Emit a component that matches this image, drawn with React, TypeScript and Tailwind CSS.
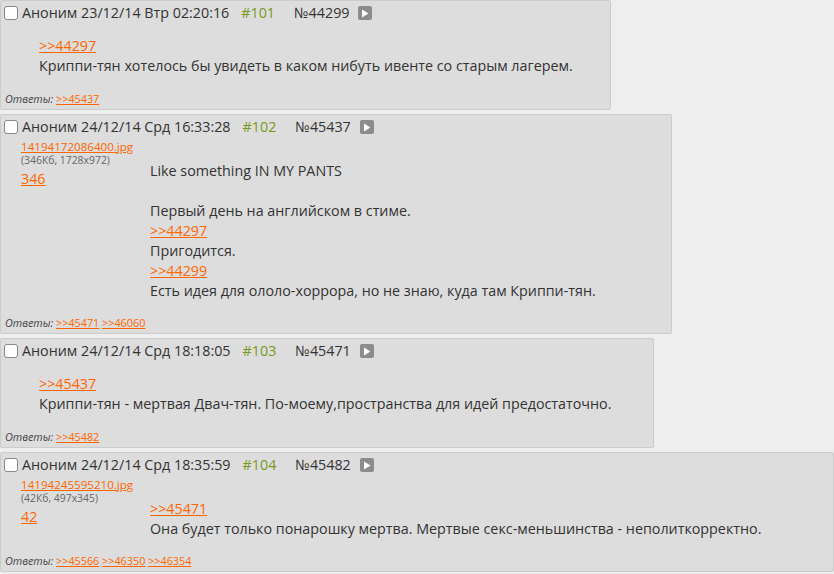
type Line = { kind: "link" | "text" | "blank"; value: string }

type Post = {
  num: number
  date: string
  id: string
  width: string
  file?: { name: string; info: string; alt: string }
  body: Line[]
  answers: string[]
}

const posts: Post[] = [
  {
    num: 101,
    date: "23/12/14 Втр 02:20:16",
    id: "44299",
    width: "w-[611px]",
    body: [
      { kind: "link", value: ">>44297" },
      { kind: "text", value: "Криппи-тян хотелось бы увидеть в каком нибуть ивенте со старым лагерем." },
    ],
    answers: [">>45437"],
  },
  {
    num: 102,
    date: "24/12/14 Срд 16:33:28",
    id: "45437",
    width: "w-[672px]",
    file: { name: "14194172086400.jpg", info: "(346Кб, 1728x972)", alt: "346" },
    body: [
      { kind: "text", value: "Like something IN MY PANTS" },
      { kind: "blank", value: "" },
      { kind: "text", value: "Первый день на английском в стиме." },
      { kind: "link", value: ">>44297" },
      { kind: "text", value: "Пригодится." },
      { kind: "link", value: ">>44299" },
      { kind: "text", value: "Есть идея для ололо-хоррора, но не знаю, куда там Криппи-тян." },
    ],
    answers: [">>45471", ">>46060"],
  },
  {
    num: 103,
    date: "24/12/14 Срд 18:18:05",
    id: "45471",
    width: "w-[654px]",
    body: [
      { kind: "link", value: ">>45437" },
      { kind: "text", value: "Криппи-тян - мертвая Двач-тян. По-моему,пространства для идей предостаточно." },
    ],
    answers: [">>45482"],
  },
  {
    num: 104,
    date: "24/12/14 Срд 18:35:59",
    id: "45482",
    width: "w-full",
    file: { name: "14194245595210.jpg", info: "(42Кб, 497x345)", alt: "42" },
    body: [
      { kind: "link", value: ">>45471" },
      { kind: "text", value: "Она будет только понарошку мертва. Мертвые секс-меньшинства - неполиткорректно." },
    ],
    answers: [">>45566", ">>46350", ">>46354"],
  },
]

function PlayButton() {
  return (
    <span className="ml-[9px] flex h-[14px] w-[14px] items-center justify-center rounded-[2px] bg-[#8c8c8c]">
      <svg width="8" height="9" viewBox="0 0 8 9">
        <path d="M1 0.5 L7.5 4.5 L1 8.5 Z" fill="#fff" />
      </svg>
    </span>
  )
}

function Body({ lines }: { lines: Line[] }) {
  return (
    <div className="whitespace-nowrap text-[14.3px] leading-[20px] text-[#333]">
      {lines.map((l, i) =>
        l.kind === "link" ? (
          <div key={i}>
            <a className="text-[#ff6600] underline">{l.value}</a>
          </div>
        ) : l.kind === "blank" ? (
          <div key={i} className="h-[20px]" />
        ) : (
          <div key={i}>{l.value}</div>
        ),
      )}
    </div>
  )
}

function PostCard({ post }: { post: Post }) {
  return (
    <div className={`${post.width} rounded-[2px] border border-[#cccccc] bg-[#dddddd]`}>
      <div className="flex items-center pt-[2px] pl-[3px] text-[14.3px] leading-[20px] text-[#333]">
        <span className="h-[14px] w-[14px] rounded-[3px] border border-[#888] bg-white" />
        <span className="ml-[4px]">Аноним {post.date}</span>
        <span className="ml-[12px] text-[#789922]">#{post.num}</span>
        <span className="ml-[19px]">№{post.id}</span>
        <PlayButton />
      </div>

      {post.file ? (
        <div className="mt-[3px] flex">
          <div className="ml-[20px] w-[129px] shrink-0">
            <a className="block text-[11.6px] leading-[14px] text-[#ff6600] underline">{post.file.name}</a>
            <div className="text-[10.4px] leading-[12px] text-[#666]">{post.file.info}</div>
            <a className="mt-[3px] block text-[14.3px] leading-[20px] text-[#ff6600] underline">{post.file.alt}</a>
          </div>
          <div className="mt-[21px]">
            <Body lines={post.body} />
          </div>
        </div>
      ) : (
        <div className="mt-[13px] pl-[38px]">
          <Body lines={post.body} />
        </div>
      )}

      <div
        className={`${post.file ? "mt-[15px]" : "mt-[16px]"} pb-[3px] pl-[4px] text-[10.8px] leading-[14px] text-[#444]`}
      >
        <span className="italic">Ответы: </span>
        {post.answers.map((a, i) => (
          <span key={a}>
            {i > 0 && " "}
            <a className="text-[#ff6600] underline">{a}</a>
          </span>
        ))}
      </div>
    </div>
  )
}

export default function App() {
  return (
    <div className="min-h-[574px] w-[834px] bg-[#eeeeee]" style={{ fontFamily: '"Open Sans", "Noto Sans", sans-serif' }}>
      <div className="flex flex-col items-start gap-[4px]">
        {posts.map((p) => (
          <PostCard key={p.num} post={p} />
        ))}
      </div>
    </div>
  )
}
